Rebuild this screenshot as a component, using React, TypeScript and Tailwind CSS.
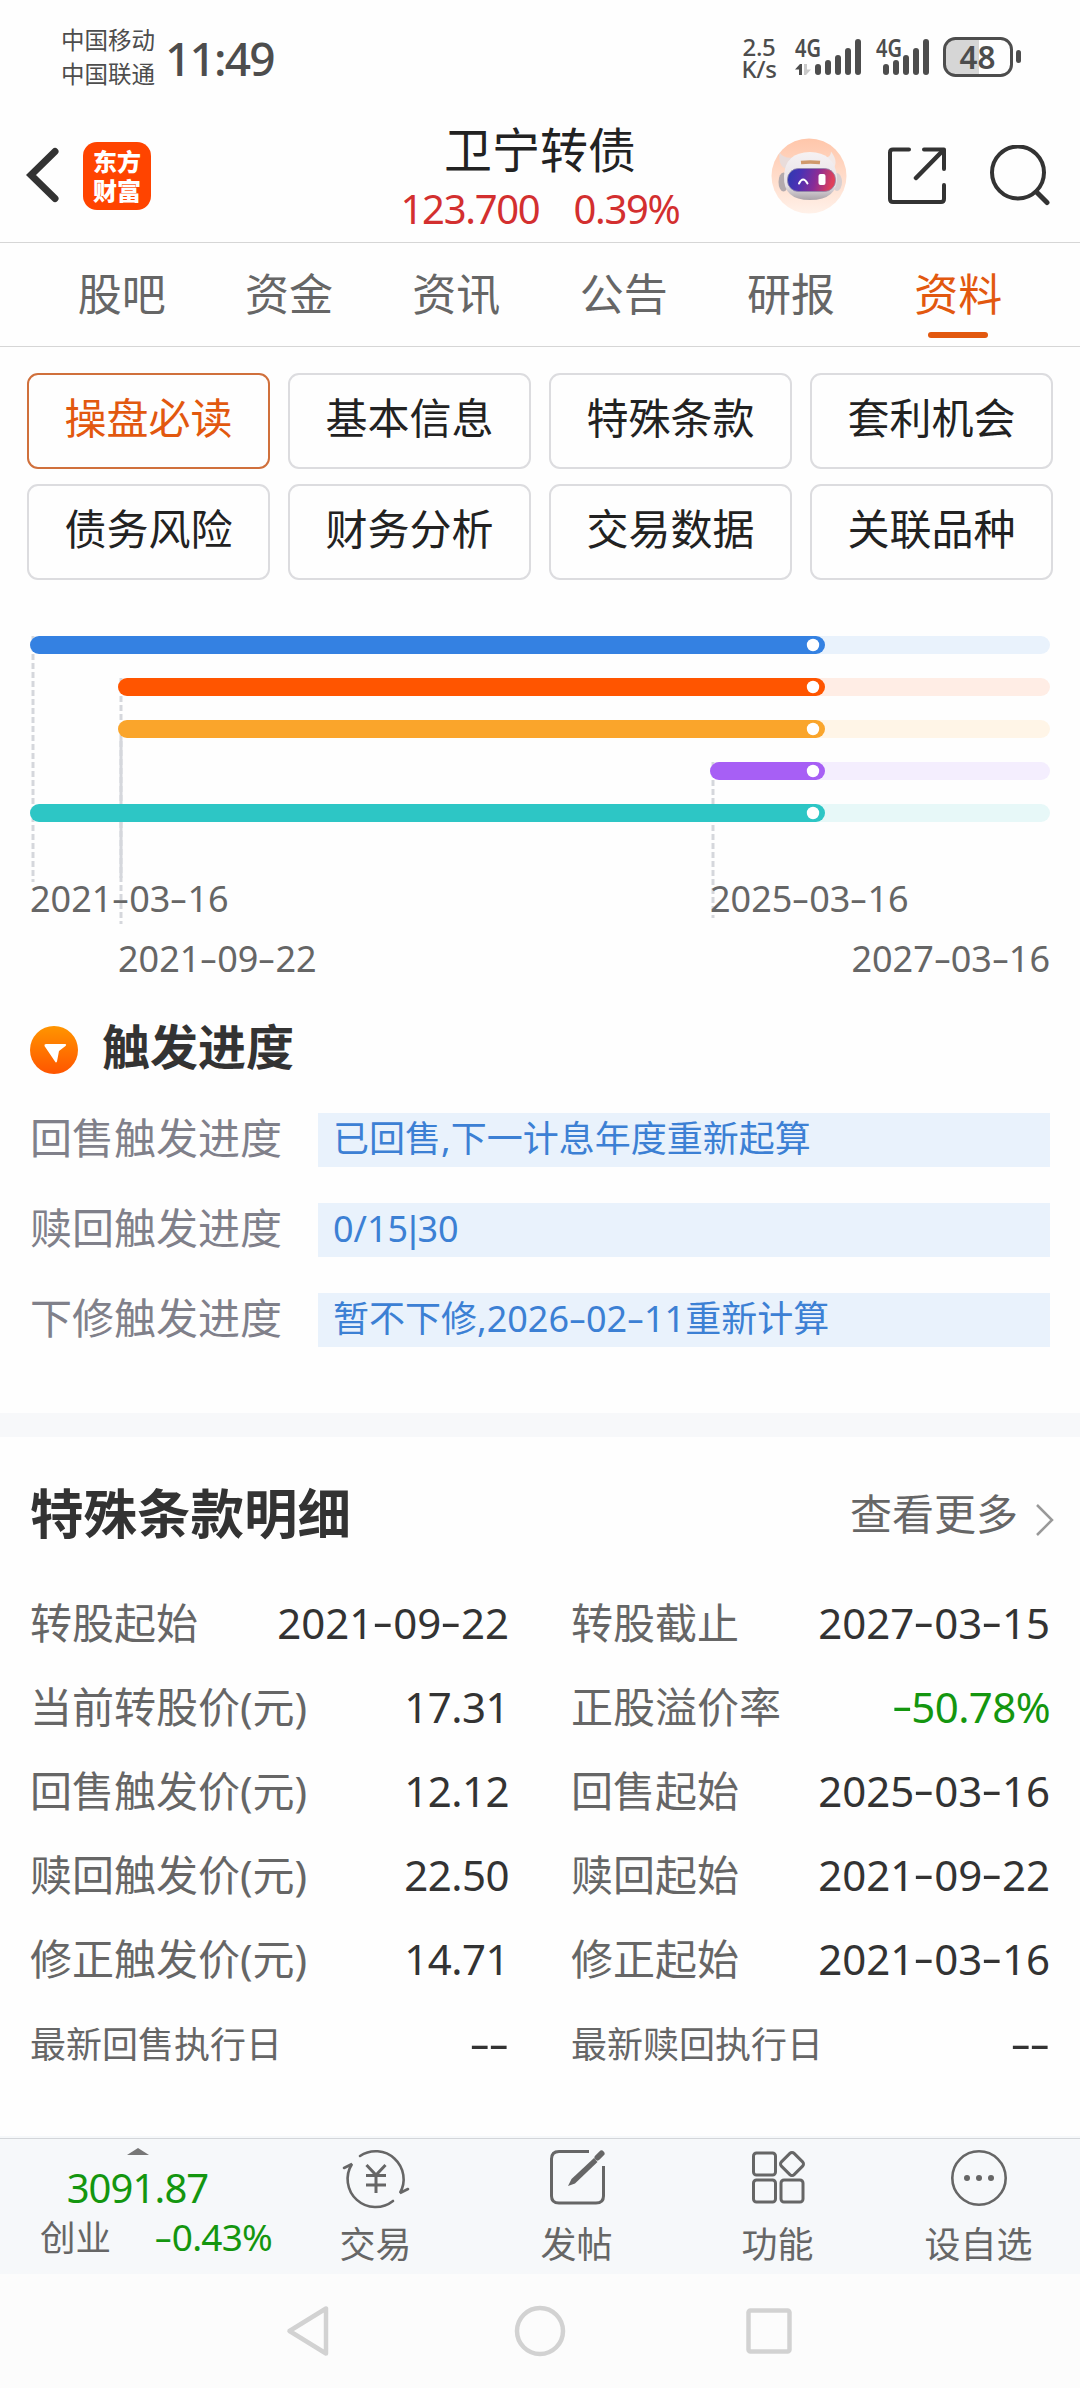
import React from "react";

/** Figures with wide, slightly raised dashes and a narrow divider bar. */
function Num({ children }: { children: string }) {
  const parts = children.split(/([-|])/);
  return (
    <span className="whitespace-nowrap">
      {parts.map((p, i) =>
        p === "-" ? (
          <span key={i} className="inline-block w-[0.47em] -translate-y-[0.04em] scale-x-[1.55] text-center leading-none">
            -
          </span>
        ) : p === "|" ? (
          <span key={i} className="font-['Liberation_Sans']">
            |
          </span>
        ) : (
          p
        ),
      )}
    </span>
  );
}

function Signal({ arrows }: { arrows?: boolean }) {
  const x0 = arrows ? 20 : 7;
  const tops = [25, 21, 16, 9, 0];
  return (
    <svg className="overflow-visible" width={arrows ? 66 : 53} height="36" viewBox={arrows ? "0 0 66 36" : "0 0 53 36"} fill="#4d4d4d">
      <text x="0" y="18" fontSize="25" fontWeight="600" textLength="26" lengthAdjust="spacingAndGlyphs">
        4G
      </text>
      {arrows && (
        <>
          <path d="M0 30.5 L5 25 H7 V36 H4 V30.5 Z" />
          <path d="M9 25 H12 V30.5 H16 L11 36 H9 Z" fill="#c9c9c9" />
        </>
      )}
      {tops.map((t, i) => (
        <rect key={t} x={x0 + i * 10} y={t} width="6" height={36 - t} rx="3" />
      ))}
    </svg>
  );
}

function StatusBar() {
  return (
    <div className="flex h-[108px] items-start pl-[61px] pr-[59px] text-[#4d4d4d]">
      <div className="mt-[23px] w-[104px] text-[23.5px] leading-[34px]">
        <div>中国移动</div>
        <div>中国联通</div>
      </div>
      <div className="mt-[35px] text-[46px] font-medium leading-[46px] tracking-[-1.8px]">11:49</div>
      <div className="ml-auto flex items-start">
        <div className="mt-[36px] mr-[17px] w-[38px] text-center text-[24px] font-medium leading-[22px] tracking-[-0.3px]">
          <div>2.5</div>
          <div>K/s</div>
        </div>
        <div className="mt-[39px] mr-[15px]">
          <Signal arrows />
        </div>
        <div className="mt-[39px] mr-[14px]">
          <Signal />
        </div>
        <svg className="mt-[37px] overflow-visible" width="78" height="40" viewBox="0 0 78 40">
          <path d="M12 3 H36 V37 H12 Q3 37 3 28 V12 Q3 3 12 3 Z" fill="#d6d6d6" />
          <rect x="1.5" y="1.5" width="67" height="37" rx="11" fill="none" stroke="#4d4d4d" strokeWidth="3" />
          <rect x="73" y="13" width="5" height="13" rx="2.5" fill="#4d4d4d" />
          <text x="16.500" y="32" fontSize="33" fontWeight="600" fill="#4d4d4d" textLength="36" lengthAdjust="spacingAndGlyphs">
            48
          </text>
        </svg>
      </div>
    </div>
  );
}

function Robot() {
  return (
    <svg width="76" height="76" viewBox="0 0 76 76">
      <defs>
        <linearGradient id="peach" x1="0" y1="0" x2="0" y2="1">
          <stop offset="0" stopColor="#ffc6aa" />
          <stop offset="1" stopColor="#fff1e9" />
        </linearGradient>
        <linearGradient id="visor" x1="0" y1="0" x2="1" y2="0.15">
          <stop offset="0" stopColor="#2b3ab0" />
          <stop offset="0.3" stopColor="#4a32b4" />
          <stop offset="0.65" stopColor="#8a2c96" />
          <stop offset="1" stopColor="#e0405a" />
        </linearGradient>
        <linearGradient id="shell" x1="0" y1="0" x2="0" y2="1">
          <stop offset="0" stopColor="#f6f2f3" />
          <stop offset="0.7" stopColor="#e6e1e5" />
          <stop offset="1" stopColor="#a9a2a8" />
        </linearGradient>
      </defs>
      <circle cx="38" cy="38" r="37.5" fill="url(#peach)" />
      <path d="M8.500 14.500 Q7 29 16 31 L25 19 Q14 22 8.500 14.500 Z" fill="#e9dcda" />
      <path d="M60 13.500 Q68 24 62 31 L53 20 Q60 20 60 13.500 Z" fill="#f3e9e7" />
      <ellipse cx="12.500" cy="44" rx="5" ry="9.500" fill="#b3aaad" />
      <ellipse cx="66" cy="44" rx="5" ry="9" fill="#d8cfd1" />
      <path d="M13 38 Q14 14.500 39 14 Q63 14.500 66 38 Q67 62 39 62 Q12 62 13 38 Z" fill="url(#shell)" />
      <rect x="16.500" y="30.500" width="48" height="23" rx="11" fill="url(#visor)" stroke="#8f86a8" strokeWidth="0.800" />
      <path d="M28 45.500 Q32 37.500 36.500 45.500" fill="none" stroke="#fff" strokeWidth="2" strokeLinecap="round" />
      <rect x="47.500" y="36" width="7" height="11" rx="2" fill="#fff" />
      <path d="M30 24.500 Q39 23.500 49 24.500" fill="none" stroke="#d09a6c" strokeWidth="3.500" />
    </svg>
  );
}

function Header() {
  return (
    <header className="grid h-[135px] grid-cols-[360px_1fr_360px] border-b border-[#d6d6d6]">
      <div className="flex items-start pl-[26px] pt-[34px]">
        <svg className="mt-[5px]" width="34" height="56" viewBox="0 0 34 56" fill="none" stroke="#333" strokeWidth="7" strokeLinecap="round">
          <path d="M29 4.5 L5 28 L29 51.5" strokeLinejoin="miter" />
        </svg>
        <div className="ml-[23px] flex h-[68px] w-[68px] flex-col items-center justify-center rounded-[14px] bg-[#ff4400] text-[24px] font-black leading-[29px] text-white">
          <span>东方</span>
          <span>财富</span>
        </div>
      </div>
      <div className="flex flex-col items-center text-center">
        <h1 className="mt-[14px] text-[48px] leading-[56px] text-[#222]">卫宁转债</h1>
        <div className="mt-[9px] flex gap-[34px] text-[40px] leading-[44px] tracking-[-1.3px] text-[#d32f2f]">
          <span>123.700</span>
          <span>0.39%</span>
        </div>
      </div>
      <div className="flex items-start pt-[30px] pl-[51px]">
        <Robot />
        <svg className="mt-[9px] ml-[41px]" width="58" height="58" viewBox="0 0 58 58" fill="none" stroke="#333" strokeWidth="4" strokeLinecap="round" strokeLinejoin="round">
          <path d="M21 2.5 H5 Q2 2.5 2 5.500 V52 Q2 55 5 55 H53 Q56 55 56 52 V38" />
          <path d="M36 2.5 H56 V22" />
          <path d="M55 3.500 L28 31" strokeWidth="4.500" />
        </svg>
        <svg className="mt-[7px] ml-[44px]" width="60" height="62" viewBox="0 0 60 62" fill="none" stroke="#333" strokeWidth="4" strokeLinecap="round">
          <ellipse cx="28" cy="27.500" rx="26" ry="26" />
          <path d="M46.500 47 L57 57.500" strokeWidth="5" />
        </svg>
      </div>
    </header>
  );
}

const tabs = ["股吧", "资金", "资讯", "公告", "研报", "资料"];

function Tabs() {
  return (
    <nav className="grid h-[104px] grid-cols-6 border-b border-[#d6d6d6] px-[38px] text-[44px] leading-[60px] text-[#666]">
      {tabs.map((t) => (
        <div key={t} className={t === "资料" ? "flex flex-col items-center pt-[21px] text-[#e2580f]" : "flex flex-col items-center pt-[21px]"}>
          <span>{t}</span>
          {t === "资料" && <span className="mt-[8px] h-[6px] w-[60px] rounded-full bg-[#e2580f]" />}
        </div>
      ))}
    </nav>
  );
}

const chips = ["操盘必读", "基本信息", "特殊条款", "套利机会", "债务风险", "财务分析", "交易数据", "关联品种"];

function Chips() {
  return (
    <div className="grid grid-cols-4 gap-x-[18px] gap-y-[15px] px-[27px] pt-[26px] text-[42px] leading-[60px]">
      {chips.map((c, i) => (
        <div
          key={c}
          className={
            i === 0
              ? "h-[96px] rounded-[11px] border-2 border-[#d0703c] pt-[13px] text-center text-[#e2580f]"
              : "h-[96px] rounded-[11px] border-2 border-[#dcdcdf] pt-[13px] text-center text-[#222]"
          }
        >
          {c}
        </div>
      ))}
    </div>
  );
}

const bars = [
  { x: 0, color: "#3481e2", track: "#e9f2fc" },
  { x: 88, color: "#ff5500", track: "#ffede5" },
  { x: 88, color: "#faa52b", track: "#fff5e7" },
  { x: 680, color: "#a75ff5", track: "#f4eefe" },
  { x: 0, color: "#2dc6c5", track: "#e7f8f8" },
];

function Timeline() {
  return (
    <div className="relative mx-[30px] mt-[56px] h-[349px] pt-[233px] text-[36px] leading-[60px] text-[#666]">
      <svg className="absolute left-0 top-0" width="1020" height="290" viewBox="0 0 1020 290">
        <g stroke="#d5d7dc" strokeWidth="3" strokeDasharray="6 3">
          <path d="M3 0 V246" />
          <path d="M91 42 V288" />
          <path d="M91 102 V242" strokeDasharray="none" />
          <path d="M683 126 V282" />
        </g>
        {bars.map((b, i) => (
          <g key={i}>
            <rect x={b.x} y={i * 42} width={1020 - b.x} height="18" rx="9" fill={b.track} />
            <rect x={b.x} y={i * 42} width={795 - b.x} height="18" rx="9" fill={b.color} />
            <circle cx="783" cy={i * 42 + 9} r="6.200" fill="#fff" />
          </g>
        ))}
      </svg>
      <div className="relative flex h-[60px] items-center">
        <span className="w-[680px]">
          <Num>2021-03-16</Num>
        </span>
        <Num>2025-03-16</Num>
      </div>
      <div className="relative flex h-[60px] items-center justify-between pl-[88px]">
        <Num>2021-09-22</Num>
        <Num>2027-03-16</Num>
      </div>
    </div>
  );
}

const progress = [
  ["回售触发进度", "已回售,下一计息年度重新起算"],
  ["赎回触发进度", "0/15|30"],
  ["下修触发进度", "暂不下修,2026-02-11重新计算"],
];

function Progress() {
  return (
    <section className="h-[428px] px-[30px] pt-[34px]">
      <div className="flex h-[60px] items-center">
        <svg className="mt-[2px]" width="48" height="48" viewBox="0 0 48 48">
          <defs>
            <linearGradient id="badge" x1="0" y1="0" x2="0" y2="1">
              <stop offset="0" stopColor="#ff9500" />
              <stop offset="1" stopColor="#ff5500" />
            </linearGradient>
          </defs>
          <circle cx="24" cy="24" r="24" fill="url(#badge)" />
          <path d="M16 18 H35 Q37 18 35.500 20 L29 25 L27 35.500 Q26 37.500 25 35.500 L14.500 20 Q14 18 16 18 Z" fill="#fff" />
        </svg>
        <h2 className="-mt-[4px] ml-[24px] text-[48px] font-bold leading-[60px] text-[#333]">触发进度</h2>
      </div>
      <div className="mt-[34px] flex flex-col gap-[36px]">
        {progress.map(([label, value]) => (
          <div key={label} className="flex h-[54px] items-start">
            <span className="-mt-[2px] w-[288px] text-[42px] leading-[54px] text-[#80808a]">{label}</span>
            <span className="h-[54px] flex-1 bg-[#e9f2fc] pl-[15px] text-[36px] leading-[52px] text-[#3c80d4]">
              <Num>{value}</Num>
            </span>
          </div>
        ))}
      </div>
    </section>
  );
}

const terms = [
  ["转股起始", "2021-09-22", "转股截止", "2027-03-15"],
  ["当前转股价(元)", "17.31", "正股溢价率", "-50.78%"],
  ["回售触发价(元)", "12.12", "回售起始", "2025-03-16"],
  ["赎回触发价(元)", "22.50", "赎回起始", "2021-09-22"],
  ["修正触发价(元)", "14.71", "修正起始", "2021-03-16"],
  ["最新回售执行日", "--", "最新赎回执行日", "--"],
];

function Cell({ label, value }: { label: string; value: string }) {
  const small = value === "--";
  const tone = value.endsWith("%")
    ? "text-[42px] tracking-[-0.6px] text-[#14960f]"
    : value.includes(".")
      ? "text-[42px] tracking-[-0.5px] text-[#333]"
      : "text-[42px] text-[#333]";
  return (
    <div className={small ? "flex h-[84px] items-center justify-between pt-[5px]" : "flex h-[84px] items-center justify-between"}>
      <span className={small ? "text-[36px] text-[#666]" : "text-[42px] text-[#666]"}>{label}</span>
      <span className={tone}>
        <Num>{value}</Num>
      </span>
    </div>
  );
}

function Terms() {
  return (
    <section className="h-[723px] border-t-[24px] border-[#f7f8fa] pl-[30px] pr-[30px]">
      <div className="flex h-[143px] items-start justify-between pt-[47px]">
        <h2 className="text-[53.5px] font-bold leading-[60px] text-[#333]">特殊条款明细</h2>
        <div className="-mr-[5px] flex items-center text-[42px] leading-[60px] text-[#666]">
          查看更多
          <svg className="ml-[17px] mt-[12px]" width="20" height="34" viewBox="0 0 20 34" fill="none" stroke="#999" strokeWidth="2.500">
            <path d="M2 2 L17 17 L2 32" />
          </svg>
        </div>
      </div>
      <div className="grid grid-cols-[479px_479px] justify-between">
        {terms.map(([a, b, c, d]) => (
          <React.Fragment key={a}>
            <Cell label={a} value={b} />
            <Cell label={c} value={d} />
          </React.Fragment>
        ))}
      </div>
    </section>
  );
}

const TradeIcon = () => (
  <svg width="68" height="64" viewBox="0 0 68 64" fill="none" stroke="#666" strokeWidth="2.600" strokeLinecap="round">
    <path d="M18 10 A28 28 0 0 1 58 47 L66 43" strokeLinejoin="bevel" />
    <path d="M51 55 A28 28 0 0 1 10 18 L2 22" strokeLinejoin="bevel" />
    <path d="M24.500 19 L34 29 L43.500 19 M34 29 V47 M24 29.500 H44 M24 39 H44" strokeWidth="3" strokeLinecap="butt" />
  </svg>
);

const PostIcon = () => (
  <svg width="68" height="64" viewBox="0 0 68 64" fill="none" stroke="#666" strokeWidth="3">
    <path d="M46 5.500 H16 Q8.500 5.500 8.500 13 V50 Q8.500 57 16 57 H53 Q60.500 57 60.500 50 V20" />
    <path d="M25 40 L28.500 33 L51 12 L54.500 16 L32 37.500 Z" fill="#666" stroke="none" />
    <path d="M54.500 11.500 L58.500 7.500" strokeWidth="6" strokeLinecap="round" />
  </svg>
);

const FeatureIcon = () => (
  <svg width="68" height="64" viewBox="0 0 68 64" fill="none" stroke="#666" strokeWidth="3">
    <rect x="9.500" y="7" width="22" height="22" rx="3" />
    <rect x="9.500" y="34" width="22" height="22" rx="3" />
    <rect x="37" y="34" width="22" height="22" rx="3" />
    <rect x="39" y="9" width="18" height="18" rx="3" transform="rotate(45 48 18)" />
  </svg>
);

const MoreIcon = () => (
  <svg width="68" height="64" viewBox="0 0 68 64">
    <circle cx="34" cy="32" r="26.700" fill="none" stroke="#666" strokeWidth="2.600" />
    <circle cx="22" cy="32" r="3" fill="#666" />
    <circle cx="34" cy="32" r="3" fill="#666" />
    <circle cx="46" cy="32" r="3" fill="#666" />
  </svg>
);

const actions = [
  { label: "交易", Icon: TradeIcon },
  { label: "发帖", Icon: PostIcon },
  { label: "功能", Icon: FeatureIcon },
  { label: "设自选", Icon: MoreIcon },
];

function BottomBar() {
  return (
    <footer className="h-[138px] bg-[#f6f8fa] pt-[2px]">
      <div className="grid h-[136px] grid-cols-[275px_repeat(4,201px)] border-t border-[#d3d6da]">
        <div className="flex flex-col items-center pt-[9px]">
          <svg width="22" height="7" viewBox="0 0 22 7" fill="#777">
            <path d="M0 7 L11 0 L22 7 Z" />
          </svg>
          <span className="mt-[10px] text-[40px] leading-[46px] tracking-[-0.9px] text-[#14960f]">3091.87</span>
          <div className="mt-[3px] flex w-full justify-between pl-[40px] pr-[3px] leading-[46px]">
            <span className="text-[35.5px] text-[#666]">创业</span>
            <span className="text-[37px] tracking-[-0.8px] text-[#14960f]">
              <Num>-0.43%</Num>
            </span>
          </div>
        </div>
        {actions.map(({ label, Icon }) => (
          <div key={label} className="flex flex-col items-center pt-[7px] text-[36px] leading-[50px] text-[#666]">
            <Icon />
            <span className="mt-[10px]">{label}</span>
          </div>
        ))}
      </div>
    </footer>
  );
}

function SystemNav() {
  return (
    <div className="flex h-[114px] items-center bg-[#fcfcfc] pl-[285px]">
      <svg width="46" height="52" viewBox="0 0 46 52" fill="none" stroke="#d2d2d2" strokeWidth="4.500" strokeLinejoin="round">
        <path d="M41 3.500 V48.500 L4.500 26 Z" />
      </svg>
      <svg className="ml-[183px]" width="52" height="52" viewBox="0 0 52 52" fill="none" stroke="#d2d2d2" strokeWidth="4.500">
        <circle cx="26" cy="26" r="23" />
      </svg>
      <svg className="ml-[180px]" width="46" height="46" viewBox="0 0 46 46" fill="none" stroke="#d2d2d2" strokeWidth="4.500">
        <rect x="2.500" y="2.500" width="41" height="41" rx="2" />
      </svg>
    </div>
  );
}

export default function App() {
  return (
    <div className="h-[2388px] w-[1080px] overflow-hidden bg-[#fefefe] font-['Noto_Sans','Noto_Sans_CJK_SC',sans-serif]">
      <StatusBar />
      <Header />
      <Tabs />
      <Chips />
      <Timeline />
      <Progress />
      <Terms />
      <BottomBar />
      <SystemNav />
    </div>
  );
}
